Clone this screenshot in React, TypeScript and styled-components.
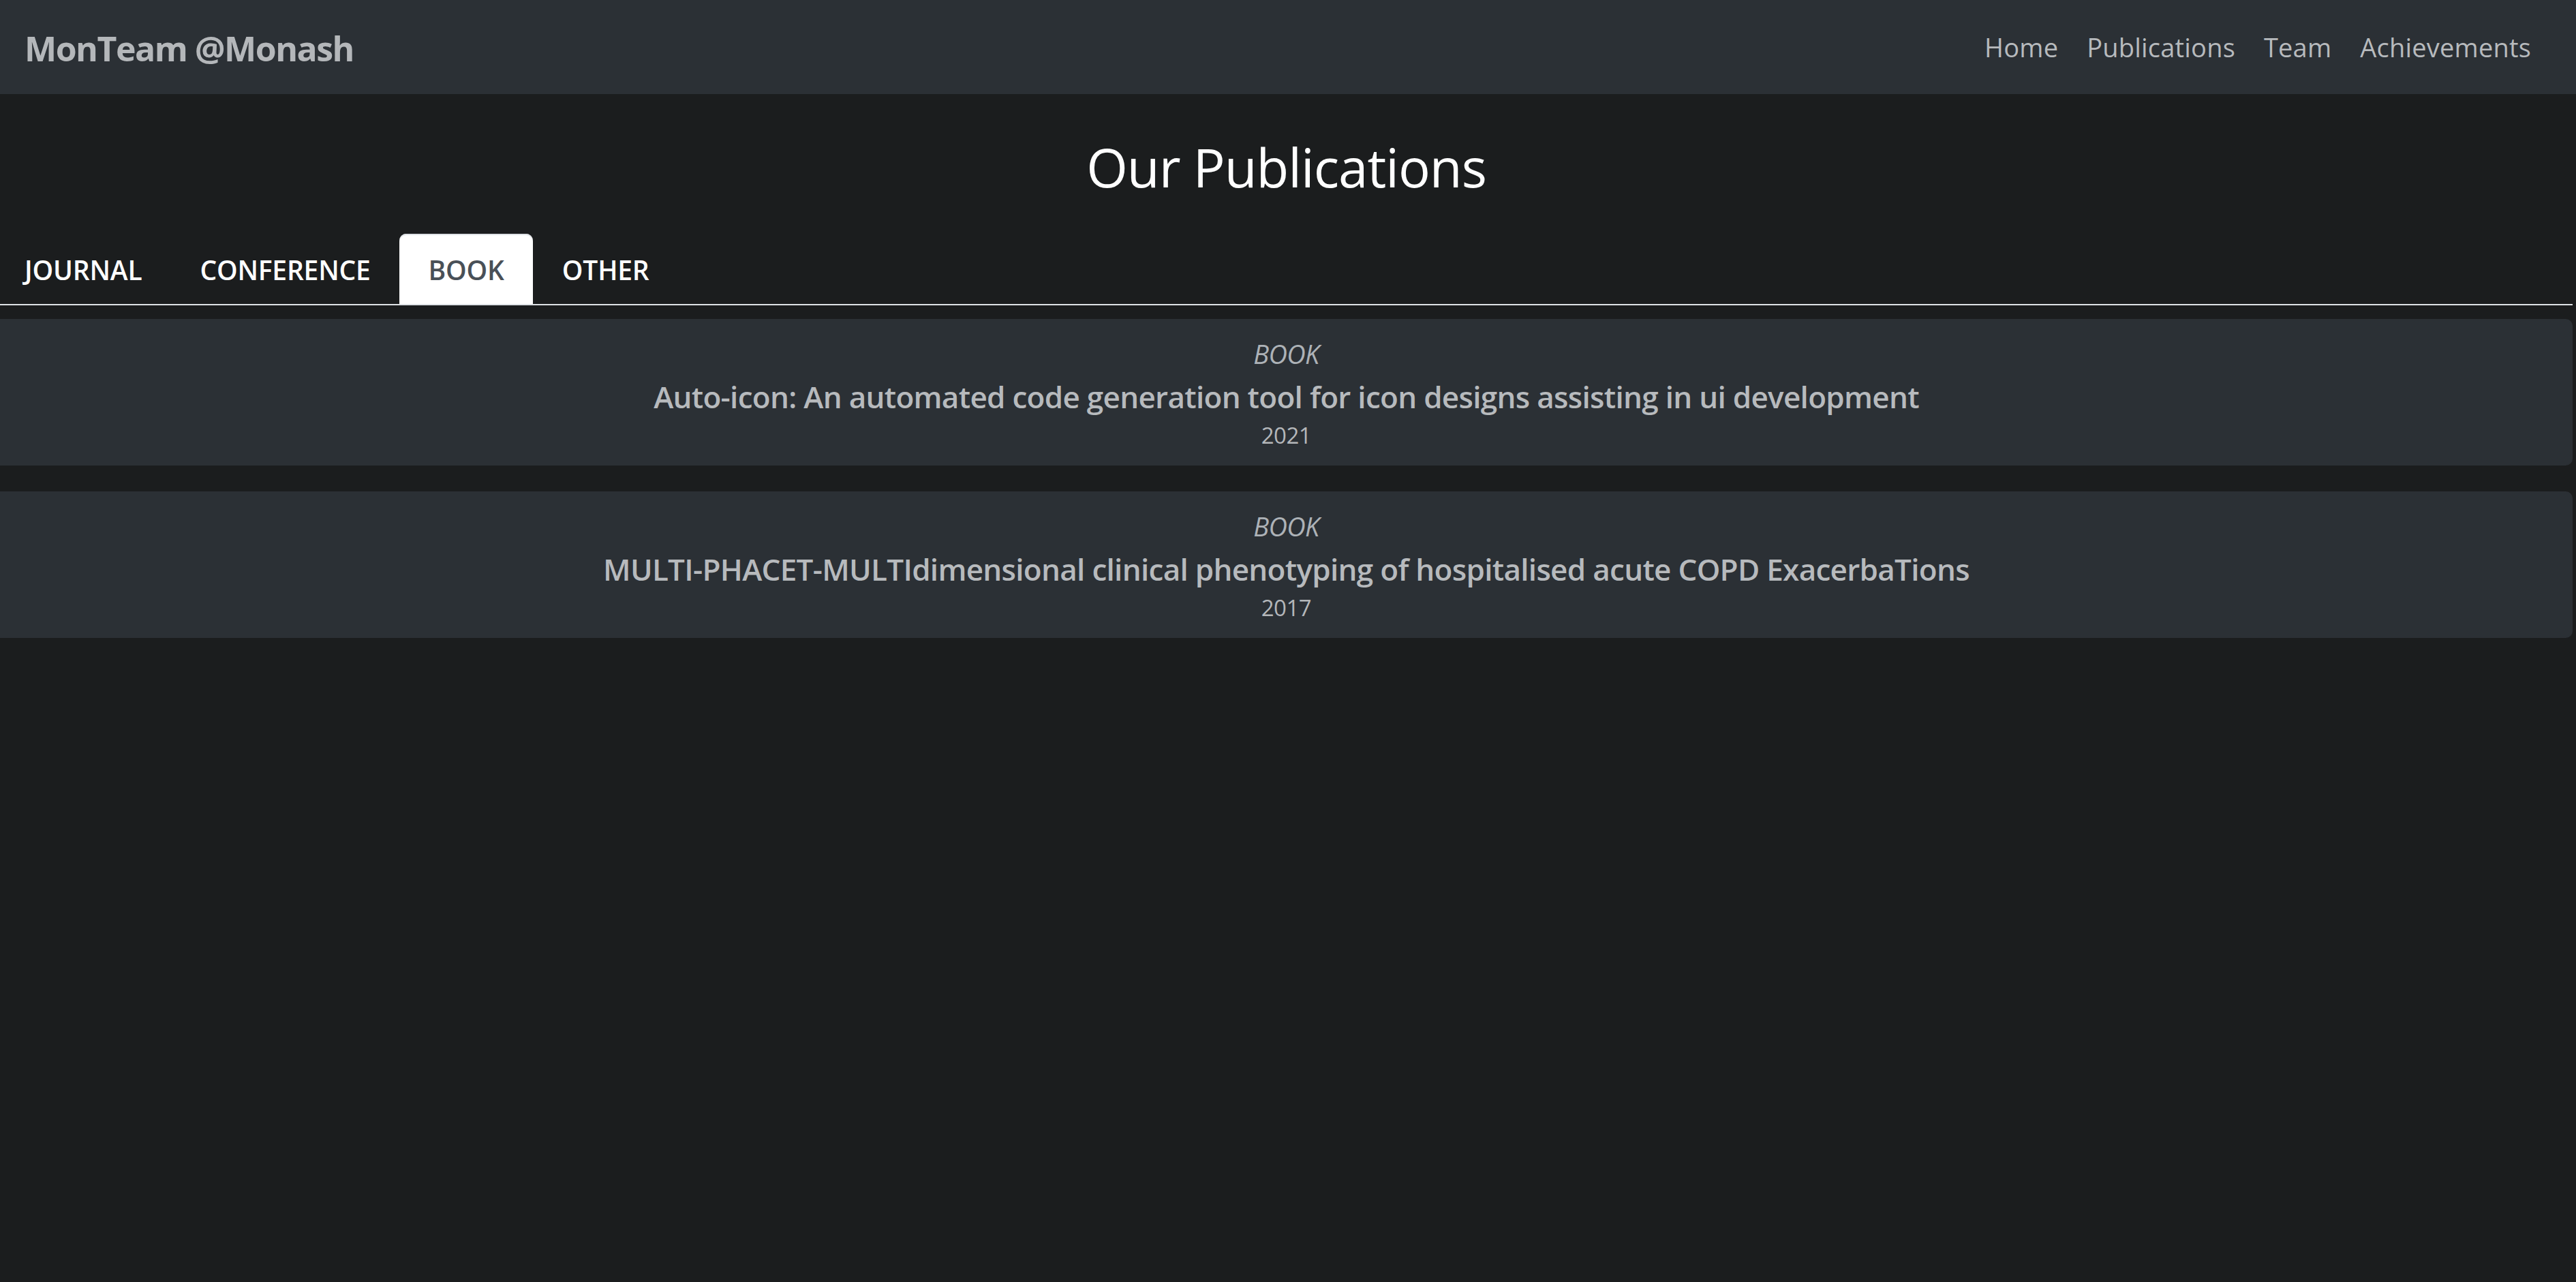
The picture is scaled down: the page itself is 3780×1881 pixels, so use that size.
import React from "react";
import styled, { createGlobalStyle } from "styled-components";

const GlobalStyle = createGlobalStyle`
  html, body {
    margin: 0;
    padding: 0;
    background: #1b1d1e;
    font-family: "Open Sans", "Noto Sans", "Liberation Sans", sans-serif;
  }
  * { box-sizing: border-box; }
`;

const Navbar = styled.header`
  display: flex;
  align-items: center;
  justify-content: space-between;
  height: 138px;
  padding: 0 66px 0 36px;
  background: #2b3035;
`;

const Brand = styled.a`
  font-size: 50px;
  font-weight: 700;
  color: #b4b7ba;
  text-decoration: none;
  letter-spacing: -1.5px;
  line-height: 1;
  margin-top: 4px;
`;

const NavLinks = styled.nav`
  display: flex;
  gap: 42px;
  align-items: center;
`;

const NavLink = styled.a`
  font-size: 38px;
  font-weight: 500;
  color: #b7babd;
  text-decoration: none;
  letter-spacing: 0.2px;
`;

const Main = styled.main`
  padding-right: 5px;
`;

const Heading = styled.h1`
  margin: 61px 0 50px;
  text-align: center;
  font-size: 78px;
  font-weight: 400;
  line-height: 1.2;
  color: #ffffff;
  letter-spacing: -1px;
`;

const TabList = styled.div`
  display: flex;
  border-bottom: 2px solid #dee2e6;
`;

const Tab = styled.button<{ $active?: boolean }>`
  font-family: inherit;
  font-size: 39px;
  font-weight: 600;
  line-height: 58px;
  padding: 24px 42px 21px 43px;
  border: none;
  border-radius: 10px 10px 0 0;
  cursor: pointer;
  letter-spacing: -0.2px;
  background: ${(p) => (p.$active ? "#ffffff" : "transparent")};
  color: ${(p) => (p.$active ? "#495057" : "#ffffff")};
  box-shadow: ${(p) => (p.$active ? "inset 0 2px 0 #dee2e6" : "none")};
  &:first-child {
    padding-left: 36px;
  }
`;

const CardList = styled.div`
  display: flex;
  flex-direction: column;
  gap: 38px;
  padding-top: 20px;
`;

const Card = styled.article`
  display: flex;
  flex-direction: column;
  align-items: center;
  text-align: center;
  background: #2b3035;
  border-radius: 0 10px 10px 0;
  padding: 22px 0 21px;
`;

const Label = styled.div`
  font-size: 38px;
  line-height: 58px;
  font-style: italic;
  color: #adb2b7;
  letter-spacing: -0.6px;
`;

const Title = styled.div`
  font-size: 44px;
  line-height: 68px;
  font-weight: 600;
  color: #b7babd;
  letter-spacing: -0.7px;
`;

const Year = styled.div`
  font-size: 33px;
  line-height: 46px;
  color: #b4b7ba;
  letter-spacing: -0.5px;
`;

const tabs = ["JOURNAL", "CONFERENCE", "BOOK", "OTHER"];

const pubs = [
  {
    type: "BOOK",
    title:
      "Auto-icon: An automated code generation tool for icon designs assisting in ui development",
    year: 2021,
  },
  {
    type: "BOOK",
    title:
      "MULTI-PHACET-MULTIdimensional clinical phenotyping of hospitalised acute COPD ExacerbaTions",
    year: 2017,
  },
];

export default function App() {
  return (
    <>
      <GlobalStyle />
      <Navbar>
        <Brand href="#">MonTeam @Monash</Brand>
        <NavLinks>
          <NavLink href="#">Home</NavLink>
          <NavLink href="#">Publications</NavLink>
          <NavLink href="#">Team</NavLink>
          <NavLink href="#">Achievements</NavLink>
        </NavLinks>
      </Navbar>
      <Main>
        <Heading>Our Publications</Heading>
        <TabList>
          {tabs.map((t) => (
            <Tab key={t} $active={t === "BOOK"}>
              {t}
            </Tab>
          ))}
        </TabList>
        <CardList>
          {pubs.map((p) => (
            <Card key={p.title}>
              <Label>{p.type}</Label>
              <Title>{p.title}</Title>
              <Year>{p.year}</Year>
            </Card>
          ))}
        </CardList>
      </Main>
    </>
  );
}
